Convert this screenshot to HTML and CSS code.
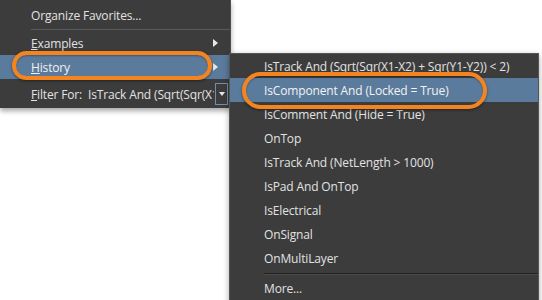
FILE: index.html
```html
<!DOCTYPE html>
<html lang="en">

<head>
    <meta charset="UTF-8">
    <title>Favorites Menu</title>
    <link rel="stylesheet" href="styles.css">
</head>

<body>

    <div class="stage">
        <div class="menu main-menu">
            <div class="item first">Organize Favorites...</div>
            <div class="separator"></div>
            <div class="item has-sub"><span><u>E</u>xamples</span><span class="arrow"></span></div>
            <div class="item has-sub active"><span><u>H</u>istory</span><span class="arrow"></span></div>
            <div class="item filter">
                <span class="filter-label"><u>F</u>ilter For:</span>
                <div class="combo">
                    <span class="combo-text">IsTrack And (Sqrt(Sqr(X1-X2) + Sqr(Y1-Y2)) &lt; 2)</span>
                    <span class="combo-btn"><span class="down"></span></span>
                </div>
            </div>
        </div>

        <div class="menu sub-menu">
            <div class="item">IsTrack And (Sqrt(Sqr(X1-X2) + Sqr(Y1-Y2)) &lt; 2)</div>
            <div class="item active">IsComponent And (Locked = True)</div>
            <div class="item">IsComment And (Hide = True)</div>
            <div class="item">OnTop</div>
            <div class="item">IsTrack And (NetLength &gt; 1000)</div>
            <div class="item">IsPad And OnTop</div>
            <div class="item">IsElectrical</div>
            <div class="item">OnSignal</div>
            <div class="item">OnMultiLayer</div>
            <div class="separator"></div>
            <div class="item">More...</div>
        </div>

        <!-- callout rings -->
        <div class="ring ring-history"></div>
        <div class="ring ring-component"></div>
    </div>

</body>

</html>
```

FILE: styles.css
```css
body {
    margin: 0;
    background-color: #ffffff;
    font-family: 'Open Sans', 'Noto Sans', sans-serif;
    font-size: 12px;
    letter-spacing: -0.15px;
    color: #e2e2e2;
}

.stage {
    position: relative;
    width: 542px;
    height: 300px;
    overflow: hidden;
}

.menu {
    background-color: #3c3c3c;
    box-sizing: border-box;
}

.main-menu {
    width: 231px;
    height: 108px;
    border-right: 1px solid #4e4e4e;
    box-shadow: 0 3px 5px rgba(0, 0, 0, 0.35);
}

.item {
    display: flex;
    align-items: center;
    justify-content: space-between;
    height: 24px;
    padding: 0 12px 0 31px;
    white-space: nowrap;
}

.main-menu .first {
    height: 29px;
    padding-top: 2px;
    box-sizing: border-box;
}

.main-menu .separator {
    height: 1px;
    margin: 0 0 1px 31px;
    background-color: #5a5a5a;
}

.item.active {
    background-color: #5b7b9c;
    color: #f2f2f2;
}

.arrow {
    width: 0;
    height: 0;
    border-top: 4px solid transparent;
    border-bottom: 4px solid transparent;
    border-left: 5px solid #e8e8e8;
}

.item.filter {
    height: 30px;
    padding-right: 2px;
    justify-content: flex-start;
}

.filter-label {
    width: 57px;
    flex-shrink: 0;
}

.combo {
    display: flex;
    align-items: center;
    flex: 1;
    min-width: 0;
}

.combo-text {
    flex: 1;
    overflow: hidden;
    white-space: nowrap;
}

.combo-btn {
    display: flex;
    align-items: center;
    justify-content: center;
    width: 11px;
    height: 20px;
    border: 1px solid #6f8fae;
    margin-left: 1px;
}

.down {
    width: 0;
    height: 0;
    border-left: 3px solid transparent;
    border-right: 3px solid transparent;
    border-top: 4px solid #e8e8e8;
}

.sub-menu {
    position: absolute;
    left: 229px;
    top: 53px;
    width: 310px;
    height: 260px;
    border: 1px solid #555555;
    box-shadow: 0 2px 6px rgba(0, 0, 0, 0.35);
}

.sub-menu .item {
    padding-left: 34px;
}

.sub-menu .separator {
    height: 1px;
    margin: 3px 0 1px 34px;
    background-color: #222222;
    border-bottom: 1px solid #4a4a4a;
}

.ring {
    position: absolute;
    border: 4px solid #f3841f;
    border-radius: 999px;
    box-shadow: 0 1px 3px rgba(0, 0, 0, 0.45), inset 0 1px 2px rgba(0, 0, 0, 0.3);
}

.ring-history {
    left: 12px;
    top: 51px;
    width: 192px;
    height: 21px;
}

.ring-component {
    left: 242px;
    top: 72px;
    width: 237px;
    height: 29px;
}
```
